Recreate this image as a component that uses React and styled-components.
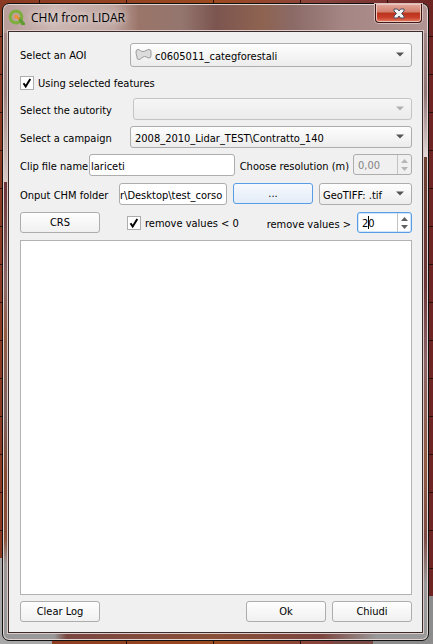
import React from "react";
import styled, { createGlobalStyle, css } from "styled-components";

const Global = createGlobalStyle`
  * { box-sizing: border-box; }
  html, body { margin: 0; }
  body, button, input, select, textarea {
    font-family: "DejaVu Sans Condensed", "DejaVu Sans", sans-serif;
    font-stretch: condensed;
    font-size: 11px;
    color: #000;
  }
`;

const Desktop = styled.div`
  min-height: 100vh;
  display: flex;
  padding: 3px 4px 3px 2px;
  background:
    linear-gradient(#a8a8a8, #a8a8a8) left bottom / 52px 86px no-repeat,
    linear-gradient(#8c8c8c, #8c8c8c) right bottom / 60px 48px no-repeat,
    linear-gradient(#7a4a46, #7a4a46) right 60px bottom / 40px 8px no-repeat,
    repeating-linear-gradient(90deg, transparent 0 39px, #2a0f0b 39px 40px, transparent 40px 87px),
    repeating-linear-gradient(0deg, transparent 0 37px, #2a0f0b 37px 38px),
    linear-gradient(90deg, #8a3a22, #9c4a20 50%, #8a4440 75%, #6d2422 100%);
`;

const Dialog = styled.main`
  flex: 1;
  min-width: 0;
  display: flex;
  flex-direction: column;
  padding: 0 5px 7px;
  border: 1px solid #111;
  border-radius: 7px;
  box-shadow: inset 0 0 0 1px #e3d5d2;
  background:
    linear-gradient(90deg, #b79c98 0, #cdb8b4 12%, #bfa5a0 26%, #9a7468 32%, #94766f 42%, #7c5550 50%, #8e6350 61%, #8b6a66 68%, #a58684 80%, #b09392 100%) top / 100% 29px no-repeat,
    linear-gradient(180deg, #a88c88 0, #a08683 14%, #d9cac7 28%, #6d3438 28%, #8c6a6a 44%, #935a40 52%, #7c6464 64%, #85492f 74%, #8a5038 84%, #9b9797 88%, #999 100%) left / 10px 100% no-repeat,
    linear-gradient(180deg, #ad9292 0, #8f7272 14%, #e2d8d6 24%, #6b4030 24%, #6a3436 44%, #8a6468 56%, #915a40 72%, #7d4a44 84%, #999 91%, #999 100%) right / 10px 100% no-repeat,
    linear-gradient(90deg, #999 0 12%, #7b4741 15%, #8a5038 50%, #7d4640 75%, #999 88%);
`;

const TitleBar = styled.header`
  height: 27px;
  display: flex;
  align-items: center;
  gap: 5px;
`;

const Title = styled.h1`
  flex: 1;
  margin: 0;
  font: 400 12px "Open Sans", "Noto Sans", sans-serif;
  text-shadow: 0 0 6px #ffffffb0, 0 0 10px #ffffff90;
`;

const CloseButton = styled.button`
  align-self: flex-start;
  width: 47px;
  height: 19px;
  margin-right: 1px;
  padding: 0;
  display: grid;
  place-items: center;
  border: 1px solid #3f1715;
  border-top: 0;
  border-radius: 0 0 4px 4px;
  background: linear-gradient(#e2a99c 0, #d27e6c 45%, #b9321a 50%, #c9402a 75%, #e58264 100%);
  box-shadow: inset 0 0 0 1px #efc5bb, 0 0 0 1px #d6c0bd;
`;

const Client = styled.form`
  flex: 1;
  display: flex;
  flex-direction: column;
  gap: 6px;
  padding: 11px 10px 10px 11px;
  border: 1px solid #3b2b2b;
  outline: 1px solid #dccbc9;
  background: #f0f0f0;
`;

const Row = styled.div`
  height: ${(p) => p.$height || 22}px;
  display: flex;
  align-items: flex-start;
  gap: ${(p) => p.$gap || 6}px;
`;

const Label = styled.label`
  flex: none;
  height: 22px;
  line-height: 26px;
  white-space: nowrap;
  width: ${(p) => (p.$width ? p.$width + "px" : "auto")};
  margin-left: ${(p) => (p.$end ? "auto" : "0")};
`;

const frame = css`
  border: 1px solid #adadad;
  border-radius: 3px;
`;

const ComboFrame = styled.span`
  ${frame}
  position: relative;
  height: ${(p) => p.$height || 22}px;
  flex: 1;
  min-width: 0;
  display: flex;
  align-items: center;
  gap: 3px;
  padding-left: ${(p) => p.$pad || 4}px;
  background: linear-gradient(#fefefe, #ececec);
  ${(p) => p.$disabled && "border-color: #c4c4c4; background: linear-gradient(#f6f6f6, #ebebeb);"}
`;

const ComboSelect = styled.select`
  appearance: none;
  flex: 1;
  min-width: 0;
  height: 100%;
  padding: 3px 16px 0 0;
  border: 0;
  outline: 0;
  background: transparent;
`;

const ComboArrow = styled.svg`
  position: absolute;
  right: 7px;
  top: 50%;
  margin-top: -3px;
  pointer-events: none;
  fill: ${(p) => (p.$disabled ? "#b0b0b0" : "#555")};
`;

const TextInput = styled.input`
  ${frame}
  flex: none;
  width: ${(p) => p.$width}px;
  height: 22px;
  padding: 2px 0 0 ${(p) => p.$pad || 0}px;
  outline: 0;
  background: #fff;
`;

const Button = styled.button`
  ${frame}
  flex: none;
  width: 80px;
  height: 21px;
  padding: 0;
  background: linear-gradient(#fefefe, #f0f0f0);
  ${(p) => p.$active && "border-color: #569de5; background: linear-gradient(#f6f9fd, #e3ecf7);"}
`;

const CheckLabel = styled.label`
  flex: none;
  height: ${(p) => p.$height || 22}px;
  display: flex;
  align-items: center;
  gap: 4px;
  white-space: nowrap;
  margin-left: ${(p) => p.$indent || 0}px;
`;

const CheckWrap = styled.span`
  position: relative;
  display: flex;
`;

const CheckBox = styled.input`
  appearance: none;
  width: 14px;
  height: 14px;
  margin: 0;
  border: 1px solid #adadad;
  background: #fff;
`;

const Tick = styled.svg`
  position: absolute;
  inset: 0;
  pointer-events: none;
`;

const SpinFrame = styled.span`
  ${frame}
  flex: none;
  width: ${(p) => p.$width}px;
  height: 21px;
  display: flex;
  background: #fff;
  ${(p) => p.$active && "border-color: #569de5; box-shadow: inset 0 0 0 1px #d3e5f8;"}
  ${(p) => p.$disabled && "background: #f0f0f0;"}
`;

const SpinValue = styled.span`
  position: relative;
  flex: 1;
  min-width: 0;
  display: flex;
`;

const SpinInput = styled.input`
  width: 100%;
  min-width: 0;
  padding: 1px 0 0 4px;
  border: 0;
  outline: 0;
  background: transparent;
  &:disabled { color: #838383; }
`;

const Caret = styled.i`
  position: absolute;
  left: 10px;
  top: 3px;
  width: 1px;
  height: 13px;
  background: #000;
`;

const SpinArrows = styled.svg`
  flex: none;
  border-left: 1px solid #c3c3c3;
`;

const Log = styled.textarea`
  flex: 1;
  min-height: 120px;
  width: 100%;
  display: block;
  resize: none;
  border: 1px solid #b2b2b2;
  outline: 0;
  background: #fff;
`;

const Footer = styled.footer`
  display: flex;
  gap: 6px;
`;

const Spacer = styled.span`
  flex: 1;
`;

function Combo({ id, value, icon, label, ...look }) {
  return (
    <ComboFrame {...look}>
      {icon}
      <ComboSelect id={id} disabled={look.$disabled} aria-label={label}>
        <option>{value}</option>
      </ComboSelect>
      <ComboArrow $disabled={look.$disabled} width="8" height="5" viewBox="0 0 8 5">
        <path d="M0 0.5h8L4 4.5z" />
      </ComboArrow>
    </ComboFrame>
  );
}

function Check({ children, ...look }) {
  return (
    <CheckLabel {...look}>
      <CheckWrap>
        <CheckBox type="checkbox" defaultChecked />
        <Tick width="14" height="14" viewBox="0 0 14 14">
          <path d="M3.5 7.2l2.2 3.3L10.3 3" fill="none" stroke="#000" strokeWidth="2" />
        </Tick>
      </CheckWrap>
      {children}
    </CheckLabel>
  );
}

function Spin({ id, value, caret, ...look }) {
  return (
    <SpinFrame {...look}>
      <SpinValue>
        <SpinInput id={id} defaultValue={value} disabled={look.$disabled} inputMode="decimal" />
        {caret && <Caret />}
      </SpinValue>
      <SpinArrows width="14" height="19" viewBox="0 0 13 19" fill={look.$disabled ? "#b5b5b5" : "#606060"}>
        <path d="M3 8h7L6.500 4zM3 12h7L6.500 16z" />
      </SpinArrows>
    </SpinFrame>
  );
}

const QgisLogo = () => (
  <svg width="18" height="17" viewBox="0 0 18 17">
    <circle cx="8" cy="8" r="5.800" fill="none" stroke="#7fae40" strokeWidth="3.200" />
    <path d="M9 8l2.500 0 5.500 6v2h-3.500z" fill="#5f9a32" />
    <path d="M6 6l5 .5-1 1 2 2-1.500 1.500-2-2-1.500 1z" fill="#ee8d32" />
  </svg>
);

const PolygonIcon = () => (
  <svg width="17" height="14" viewBox="0 0 17 14">
    <path
      d="M1 4Q1 1.500 3 1.500C5 1.500 5.500 3.500 8 3.500S11.500 1.800 14 1.500Q16 1.500 16 3.500V7.500Q16 10 14 10C12.500 10 11.500 8.500 9.500 8.500C7.500 8.500 6 11.500 3.800 11.500Q2 11.500 2 9.500C2 7.500 1 6.500 1 4Z"
      fill="#dcdcdc"
      stroke="#999"
    />
  </svg>
);

export default function App() {
  return (
    <>
      <Global />
      <Desktop>
        <Dialog>
          <TitleBar>
            <QgisLogo />
            <Title>CHM from LIDAR</Title>
            <CloseButton type="button" aria-label="Close">
              <svg width="12" height="11" viewBox="0 0 12 11">
                <path d="M1 1h3.500L6 3l1.500-2H11v2L8.500 5.500 11 8v2H7.500L6 8l-1.500 2H1V8l2.500-2.500L1 3z" fill="#f4f4f4" stroke="#4a4f63" />
              </svg>
            </CloseButton>
          </TitleBar>
          <Client onSubmit={(e) => e.preventDefault()}>
            <Row $height={25}>
              <Label htmlFor="aoi" $width={104}>Select an AOI</Label>
              <Combo id="aoi" value="c0605011_categforestali" icon={<PolygonIcon />} $height={24} />
            </Row>
            <Row $height={18}>
              <Check $height={18}>Using selected features</Check>
            </Row>
            <Row>
              <Label htmlFor="authority" $width={107}>Select the autority</Label>
              <Combo id="authority" value="" $disabled />
            </Row>
            <Row>
              <Label htmlFor="campaign" $width={104}>Select a campaign</Label>
              <Combo id="campaign" value="2008_2010_Lidar_TEST\Contratto_140" />
            </Row>
            <Row $height={23} $gap={4}>
              <Label htmlFor="clip" $width={65}>Clip file name</Label>
              <TextInput id="clip" defaultValue="lariceti" $width={146} $pad={1} />
              <Label htmlFor="resolution" $end>Choose resolution (m)</Label>
              <Spin id="resolution" value="0,00" $width={59} $disabled />
            </Row>
            <Row $height={23}>
              <Label htmlFor="folder" $width={93}>Onput CHM folder</Label>
              <TextInput id="folder" defaultValue="r\Desktop\test_corso" $width={108} />
              <Button type="button" $active>...</Button>
              <Combo label="Format" value="GeoTIFF: .tif" $pad={3} />
            </Row>
            <Row>
              <Button type="button">CRS</Button>
              <Check $indent={21}>remove values &lt; 0</Check>
              <Label htmlFor="limit" $end>remove values &gt;</Label>
              <Spin id="limit" value="20" caret $width={55} $active />
            </Row>
            <Log aria-label="Log" />
            <Footer>
              <Button type="button">Clear Log</Button>
              <Spacer />
              <Button type="submit">Ok</Button>
              <Button type="button">Chiudi</Button>
            </Footer>
          </Client>
        </Dialog>
      </Desktop>
    </>
  );
}
